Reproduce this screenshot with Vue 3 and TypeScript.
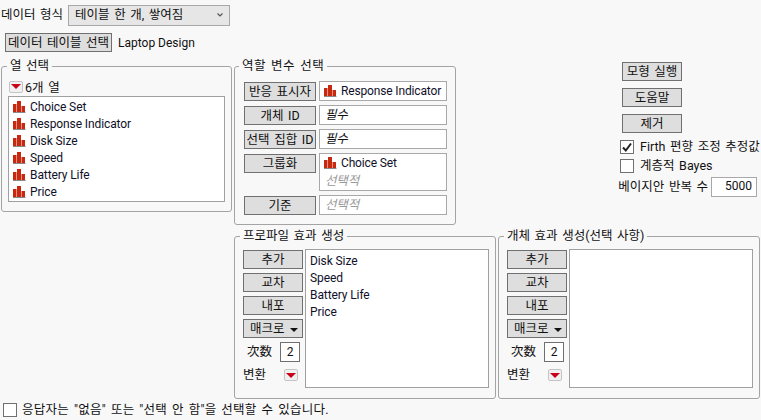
<script setup lang="ts">
const columns = ['Choice Set', 'Response Indicator', 'Disk Size', 'Speed', 'Battery Life', 'Price']
const profileTerms = ['Disk Size', 'Speed', 'Battery Life', 'Price']
const effectGroups = [
  { title: '프로파일 효과 생성', terms: profileTerms },
  { title: '개체 효과 생성(선택 사항)', terms: [] as string[] },
]
</script>

<template>
  <div class="page">
    <div class="format-row">
      <span class="ko">데이터 형식</span>
      <div class="select">
        <span class="ko">테이블 한 개, 쌓여짐</span>
        <svg class="chevron" width="6" height="4" viewBox="0 0 6 4">
          <path d="M0.5 0.5 L3 3 L5.500 0.5" fill="none" stroke="#555" stroke-width="1.2" />
        </svg>
      </div>
    </div>

    <div class="table-row">
      <button class="btn table-btn ko">데이터 테이블 선택</button>
      <span>Laptop Design</span>
    </div>

    <div class="main">
      <fieldset class="group columns-group">
        <legend class="ko">열 선택</legend>
        <div class="count-row">
          <span class="red-btn"><i /></span>
          <span class="ko count-label">6개 열</span>
        </div>
        <ul class="list columns-list">
          <li v-for="c in columns" :key="c">
            <svg class="bars" width="13" height="12" viewBox="0 0 13 12">
              <path d="M0 3h3.500v8H0zM4 0h4v11H4zM8.500 5H12v6H8.500z" fill="#c8280f" />
              <path d="M0 11h12.500v1H0z" fill="#8a8a8a" />
            </svg>
            {{ c }}
          </li>
        </ul>
      </fieldset>

      <div class="right">
        <div class="top-right">
          <fieldset class="group role-group">
            <legend class="ko">역할 변수 선택</legend>
            <div class="role-grid">
              <button class="btn ko">반응 표시자</button>
              <div class="slot">
                <svg class="bars" width="13" height="12" viewBox="0 0 13 12">
                  <path d="M0 3h3.500v8H0zM4 0h4v11H4zM8.500 5H12v6H8.500z" fill="#c8280f" />
                  <path d="M0 11h12.500v1H0z" fill="#8a8a8a" />
                </svg>
                Response Indicator
              </div>
              <button class="btn ko">개체 ID</button>
              <div class="slot required ko">필수</div>
              <button class="btn ko">선택 집합 ID</button>
              <div class="slot required ko">필수</div>
              <button class="btn ko">그룹화</button>
              <div class="slot tall">
                <div>
                  <svg class="bars" width="13" height="12" viewBox="0 0 13 12">
                    <path d="M0 3h3.500v8H0zM4 0h4v11H4zM8.500 5H12v6H8.500z" fill="#c8280f" />
                    <path d="M0 11h12.500v1H0z" fill="#8a8a8a" />
                  </svg>
                  Choice Set
                </div>
                <div class="optional ko">선택적</div>
              </div>
              <button class="btn ko">기준</button>
              <div class="slot optional ko">선택적</div>
            </div>
          </fieldset>

          <div class="actions">
            <button class="btn action ko">모형 실행</button>
            <button class="btn action ko">도움말</button>
            <button class="btn action ko">제거</button>
            <label class="check first">
              <span class="box">
                <svg width="12" height="12" viewBox="0 0 12 12">
                  <path d="M2 6.500 L4.800 9.500 L10 2.500" fill="none" stroke="#222" stroke-width="2" />
                </svg>
              </span>
              <span class="ko">Firth 편향 조정 추정값</span>
            </label>
            <label class="check">
              <span class="box" />
              <span class="ko">계층적 Bayes</span>
            </label>
            <div class="bayes-row">
              <span class="ko">베이지안 반복 수</span>
              <span class="num-input">5000</span>
            </div>
          </div>
        </div>

        <div class="bottom-right">
          <fieldset v-for="g in effectGroups" :key="g.title" class="group effect-group">
            <legend class="ko">{{ g.title }}</legend>
            <div class="effect-body">
              <div class="effect-controls">
                <button class="btn ko">추가</button>
                <button class="btn ko">교차</button>
                <button class="btn ko">내포</button>
                <button class="btn macro ko">매크로<i class="down" /></button>
                <div class="degree-row">
                  <span class="ko">次数</span>
                  <span class="degree">2</span>
                </div>
                <div class="transform-row">
                  <span class="ko">변환</span>
                  <span class="red-btn"><i /></span>
                </div>
              </div>
              <ul class="list effect-list">
                <li v-for="t in g.terms" :key="t">{{ t }}</li>
              </ul>
            </div>
          </fieldset>
        </div>
      </div>
    </div>

    <label class="check footer">
      <span class="box" />
      <span class="ko footer-text">응답자는 "없음" 또는 "선택 안 함"을 선택할 수 있습니다.</span>
    </label>
  </div>
</template>

<style scoped>
.page {
  width: 761px;
  height: 420px;
  box-sizing: border-box;
  padding-top: 5px;
  overflow: hidden;
  background: #f8f8f8;
  color: #111;
  font: 12px/16px Roboto, "Noto Sans CJK KR", sans-serif;
}

.ko {
  font-size: 12.5px;
  word-spacing: 1.5px;
  white-space: nowrap;
}

.format-row {
  display: flex;
  align-items: center;
  gap: 5px;
  height: 20px;
  padding-left: 1px;
}

.select {
  display: flex;
  align-items: center;
  justify-content: space-between;
  box-sizing: border-box;
  width: 162px;
  height: 21px;
  padding: 0 6px;
  border: 1px solid #a8a8a8;
  background: #e6e6e6;
}

.table-row {
  display: flex;
  align-items: center;
  gap: 6px;
  margin-top: 8px;
  padding-left: 5px;
}

.btn {
  box-sizing: border-box;
  height: 19px;
  padding: 0;
  border: 1px solid #707070;
  border-radius: 0;
  background: #dedede;
  color: #111;
  font-family: inherit;
  line-height: 15px;
}

.table-btn {
  width: 107px;
}

.main {
  display: flex;
  gap: 2px;
  margin-top: 6px;
  padding-left: 1px;
}

.group {
  box-sizing: border-box;
  min-width: 0;
  margin: 0;
  border: 1px solid #a4a4a4;
  border-radius: 3px;
}

.group legend {
  padding: 0 3px;
  line-height: 16px;
}

.columns-group {
  flex: none;
  width: 231px;
  height: 154px;
  padding: 5px 5px 0 6px;
}

.columns-group legend {
  margin-left: -1px;
}

.count-row {
  display: flex;
  align-items: center;
  gap: 2px;
  padding-left: 1px;
  height: 15px;
}

.count-label {
  margin-top: 2px;
}

.red-btn {
  display: inline-flex;
  align-items: center;
  justify-content: center;
  box-sizing: border-box;
  width: 14px;
  height: 12px;
  border: 1px solid #c4c4c4;
  border-radius: 2px;
  background: #f0f0f0;
}

.red-btn i {
  width: 0;
  height: 0;
  border-style: solid;
  border-width: 5px 5px 0;
  border-color: #c80018 transparent transparent;
}

.list {
  box-sizing: border-box;
  margin: 0;
  padding: 0;
  list-style: none;
  border: 1px solid #a0a0a0;
  background: #fff;
  color: #10102a;
  letter-spacing: -0.1px;
}

.columns-list {
  width: 217px;
  height: 106px;
  margin-top: 2px;
  padding: 1px 0 0 4px;
}

.columns-list li {
  display: flex;
  align-items: center;
  gap: 4px;
  height: 17px;
}

.bars {
  flex: none;
}

.right {
  display: flex;
  flex-direction: column;
}

.top-right {
  display: flex;
  height: 170px;
}

.role-group {
  width: 222px;
  height: 167px;
  padding: 7px 7px 0 9px;
}

.role-group legend {
  margin-left: -5px;
  letter-spacing: 0.5px;
}

.role-grid {
  display: grid;
  grid-template-columns: 72px 128px;
  grid-template-rows: 20px 20px 20px 38px 20px;
  column-gap: 3px;
  row-gap: 4px;
}

.role-grid .btn {
  margin-top: 1px;
}

.slot {
  box-sizing: border-box;
  display: flex;
  align-items: center;
  gap: 4px;
  padding-left: 4px;
  border: 1px solid #a8a8a8;
  background: #fff;
  color: #10102a;
  letter-spacing: -0.15px;
  white-space: nowrap;
}

.slot.required {
  padding-left: 5px;
  font-style: italic;
  color: #111;
}

.slot.tall {
  display: block;
  padding-top: 1px;
}

.slot.tall > div:first-child {
  display: flex;
  align-items: center;
  gap: 4px;
}

.optional {
  font-style: italic;
  color: #9a9a9a;
}

.slot.optional {
  padding-left: 5px;
}

.slot.tall .optional {
  margin: 2px 0 0 1px;
}

.actions {
  display: flex;
  flex-direction: column;
  flex: 1;
  padding-top: 4px;
}

.action {
  width: 60px;
  margin: 0 0 7px 166px;
}

.check {
  display: flex;
  align-items: center;
  gap: 6px;
}

.box {
  display: inline-flex;
  align-items: center;
  justify-content: center;
  box-sizing: border-box;
  width: 14px;
  height: 14px;
  border: 1px solid #707070;
  background: #fff;
}

.actions .check {
  margin-left: 164px;
  height: 14px;
  margin-bottom: 5px;
  white-space: nowrap;
}

.bayes-row {
  display: flex;
  align-items: center;
  justify-content: flex-end;
  gap: 3px;
  margin-top: -1px;
  padding-right: 3px;
  white-space: nowrap;
}

.num-input {
  box-sizing: border-box;
  width: 46px;
  height: 20px;
  padding-right: 4px;
  border: 1px solid #a8a8a8;
  background: #fff;
  text-align: right;
}

.bottom-right {
  display: flex;
  gap: 2px;
}

.effect-group {
  width: 262px;
  height: 171px;
  padding: 5px 6px 0 8px;
}

.effect-group legend {
  margin-left: -3px;
}

.effect-body {
  display: flex;
  gap: 2px;
}

.effect-controls {
  display: flex;
  flex-direction: column;
  width: 60px;
  flex: none;
  gap: 4px;
  padding-top: 1px;
}

.macro {
  text-align: left;
  padding-left: 6px;
}

.down {
  display: inline-block;
  width: 0;
  height: 0;
  margin-left: 5px;
  vertical-align: 1px;
  border-style: solid;
  border-width: 4px 4px 0;
  border-color: #111 transparent transparent;
}

.degree-row {
  display: flex;
  align-items: center;
  justify-content: space-between;
  padding: 0 3px 0 4px;
  height: 20px;
}

.degree {
  box-sizing: border-box;
  width: 20px;
  height: 20px;
  border: 1px solid #707070;
  background: #fff;
  text-align: center;
  line-height: 18px;
}

.transform-row {
  display: flex;
  align-items: center;
  justify-content: space-between;
  padding-right: 5px;
  margin-top: 1px;
}

.effect-list {
  width: 184px;
  height: 139px;
  padding: 3px 0 0 4px;
}

.effect-list li {
  height: 17px;
}

.footer {
  margin: 4px 0 0 3px;
  gap: 5px;
  height: 14px;
}

.footer-text {
  letter-spacing: 0.27px;
}
</style>
